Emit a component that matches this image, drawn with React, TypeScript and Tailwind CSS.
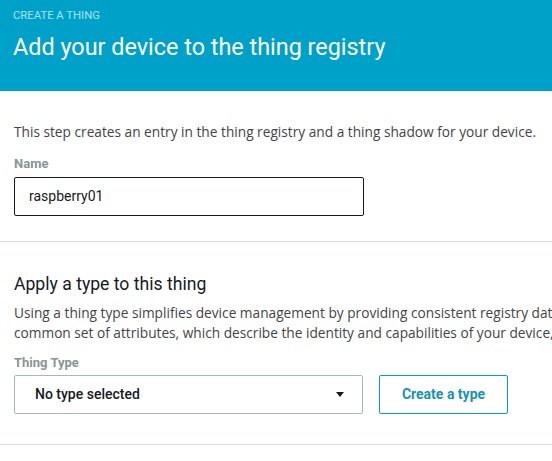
import React from "react";

const font = { fontFamily: "Roboto, 'Noto Sans', sans-serif" };

const App = () => {
  return (
    <div className="w-[552px] h-[461px] overflow-hidden bg-white" style={font}>
      {/* Header */}
      <div className="h-[91px] bg-[#00a1c9] px-[13px] pt-[9px]">
        <div className="text-[11.3px] leading-[14px] text-[#a8e3f2]">CREATE A THING</div>
        <h1 className="mt-[9px] text-[23.4px] leading-[30px] text-white">Add your device to the thing registry</h1>
      </div>

      {/* Name section */}
      <div className="px-[14px] pt-[32px] pb-[25px] border-b border-[#d5dbdb] whitespace-nowrap">
        <p className="font-['Open_Sans',sans-serif] text-[13.7px] leading-[18px] text-[#444]">
          This step creates an entry in the thing registry and a thing shadow for your device.
        </p>
        <label className="block mt-[14px] text-[13px] leading-[18px] font-bold text-[#879596]">Name</label>
        <div className="mt-[4px] w-[350px] h-[39px] border border-[#16191f] rounded-[2px] flex items-center px-[14px] text-[14px] text-[#16191f]">
          raspberry01
        </div>
      </div>

      {/* Type section */}
      <div className="px-[14px] pt-[30px] pb-[30px] border-b border-[#d5dbdb] whitespace-nowrap overflow-hidden">
        <h2 className="text-[17.6px] leading-[24px] text-[#16191f]">Apply a type to this thing</h2>
        <p className="mt-[7px] font-['Open_Sans',sans-serif] text-[13.7px] leading-[20px] text-[#444]">
          Using a thing type simplifies device management by providing consistent registry data for things that share a type. Types provide things with a
          <br />
          common set of attributes, which describe the identity and capabilities of your device, and a description.
        </p>
        <label className="block mt-[11px] text-[13px] leading-[18px] font-bold text-[#879596]">Thing Type</label>
        <div className="mt-[3px] flex gap-[16px]">
          <div className="w-[349px] h-[39px] border border-[#aab7b8] rounded-[2px] flex items-center justify-between pl-[20px] pr-[18px]">
            <span className="text-[14px] font-medium text-[#16191f]">No type selected</span>
            <svg width="8" height="5" viewBox="0 0 8 5">
              <path d="M0 0h8L4 5z" fill="#16191f" />
            </svg>
          </div>
          <button className="w-[129px] h-[39px] border border-[#00a1c9] rounded-[2px] text-[14px] font-bold text-[#1592b8]">
            Create a type
          </button>
        </div>
      </div>
    </div>
  );
};

export default App;
